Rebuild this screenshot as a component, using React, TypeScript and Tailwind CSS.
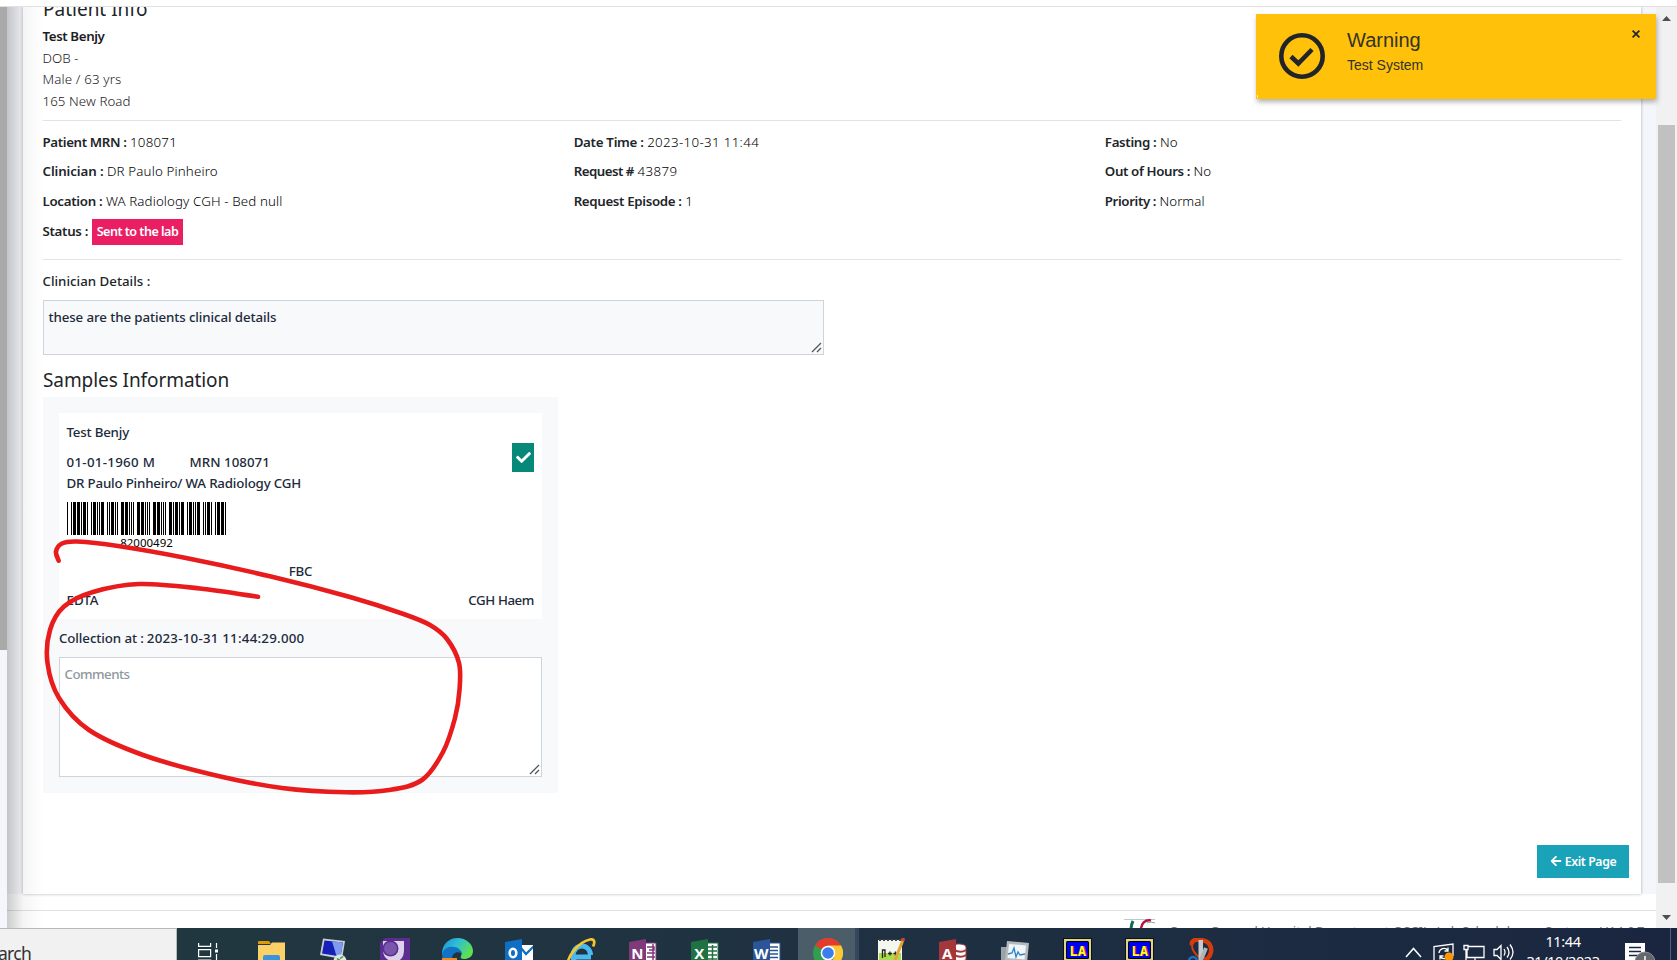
import type { ReactNode } from "react";
import { FaArrowLeft, FaCheck } from "react-icons/fa";

/* ---------- barcode (Code 39) ---------- */
const CODE39: Record<string, string> = {
  "*": "nwnnwnwnn",
  "0": "nnnwwnwnn",
  "2": "nnwwnnnnw",
  "4": "nnnwwnnnw",
  "8": "wnnwnnwnn",
  "9": "nnwwnnwnn",
};

function Barcode({ value }: { value: string }) {
  const bars: { x: number; w: number }[] = [];
  let x = 0;
  for (const ch of `*${value}*`) {
    [...CODE39[ch]].forEach((c, i) => {
      const w = c === "w" ? 3 : 1;
      if (i % 2 === 0) bars.push({ x, w });
      x += w;
    });
    x += 1;
  }
  return (
    <svg width="159" height="33" shapeRendering="crispEdges" className="block">
      {bars.map((b) => (
        <rect key={b.x} x={b.x} y="0" width={b.w} height="33" fill="#000" />
      ))}
    </svg>
  );
}

/* ---------- freehand red marker ---------- */
const MARK: [number, number][] = [
  [58.6, 560.7], [56, 551.5], [62, 543.5], [77, 541.5], [118, 546], [186, 558], [271, 576.5],
  [350, 597], [403.5, 614], [430, 625], [447, 639], [459, 663], [459.5, 690], [455, 718], [443, 752], [422, 780],
  [389, 790], [346, 792.3], [282, 788], [214, 775], [143, 755], [89, 730], [59, 698],
  [47.5, 663], [50, 630], [64, 606.5], [93, 592], [139, 584], [200, 588.5], [258, 596.8],
];

function smooth(p: [number, number][]) {
  let d = `M${p[0][0]} ${p[0][1]}`;
  for (let i = 0; i < p.length - 1; i++) {
    const a = p[Math.max(i - 1, 0)];
    const b = p[i];
    const c = p[i + 1];
    const e = p[Math.min(i + 2, p.length - 1)];
    d += ` C${b[0] + (c[0] - a[0]) / 6} ${b[1] + (c[1] - a[1]) / 6} ${c[0] - (e[0] - b[0]) / 6} ${c[1] - (e[1] - b[1]) / 6} ${c[0]} ${c[1]}`;
  }
  return d;
}

function Grip() {
  return (
    <svg width="11" height="11" viewBox="0 0 11 11" className="absolute right-[1px] bottom-[1px]" stroke="#555" strokeWidth="1.3" fill="none">
      <path d="M1 10L10 1M6 10L10 6" />
    </svg>
  );
}

function Field({ label, track, children, vtrack = "" }: { label: string; track: string; children: ReactNode; vtrack?: string }) {
  return (
    <div className="flex h-[29.5px] items-center gap-[3.5px] whitespace-nowrap">
      <span className={`font-semibold ${track}`}>{label}</span>
      <span className={`font-[350] text-black ${vtrack}`}>{children}</span>
    </div>
  );
}

/* ---------- taskbar icons ---------- */
function OfficeIcon({ letter, color, kind }: { letter: string; color: string; kind: "tabs" | "grid" | "lines" | "db" }) {
  return (
    <svg width="28" height="32" viewBox="0 0 28 32">
      {kind !== "db" && <rect x="14" y="4" width="13" height="24" fill="#fff" stroke={color} strokeWidth="1" />}
      {kind === "tabs" && <path d="M18 8h7v3h-5M18 14h8M18 18h8M18 22h8M24 5v20" stroke={color} strokeWidth="1.5" fill="none" />}
      {kind === "grid" && <path d="M17 8h9M17 12h9M17 16h9M17 20h9M21.5 6v20" stroke={color} strokeWidth="1.5" fill="none" />}
      {kind === "lines" && <path d="M17 8h8M17 11.5h8M17 15h8M17 18.5h8M17 22h8" stroke={color} strokeWidth="1.5" fill="none" />}
      {kind === "db" && (
        <g fill="#fff" stroke={color}>
          <path d="M15 6c3-2 12-1 12 2v16H15z" />
          <path d="M15 11c4 2 9 2 12 0M15 16c4 2 9 2 12 0M15 21c4 2 9 2 12 0" strokeWidth="2" fill="none" />
        </g>
      )}
      <path d="M0 3L17 0V32L0 29z" fill={color} />
      <text x="8.3" y="19.5" fontSize="15" fontWeight="700" textAnchor="middle" fill="#fff" fontFamily="Open Sans, sans-serif">{letter}</text>
    </svg>
  );
}

function LaIcon() {
  return (
    <svg width="29" height="32" viewBox="0 0 29 32">
      <rect x="0" y="0" width="29" height="32" fill="#111" />
      <rect x="1" y="1" width="27" height="30" fill="#d9d58d" />
      <rect x="3" y="3" width="23" height="18" rx="1.5" fill="#000" />
      <rect x="4" y="4" width="21" height="16" fill="#0000f0" />
      <text x="15.7" y="18" fontSize="14" fontWeight="700" textAnchor="middle" fill="#d01010" fontFamily="DejaVu Sans Mono, monospace">LA</text>
      <text x="14.7" y="18" fontSize="14" fontWeight="700" textAnchor="middle" fill="#ffff20" fontFamily="DejaVu Sans Mono, monospace">LA</text>
    </svg>
  );
}

function Cell({ children, top = "pt-[10px]" }: { children: ReactNode; top?: string }) {
  return <div className={`flex w-[62px] shrink-0 justify-center ${top}`}>{children}</div>;
}

function Taskbar() {
  return (
    <div className="flex h-[32px] shrink-0 overflow-hidden bg-linear-to-r from-[#22393f] via-[#1f3142] to-[#1a2640]">
      <div className="flex h-[32px] w-[177px] shrink-0 border-t border-r border-[#b9b9b9] bg-[#f1f1f1]">
        <span className="-ml-[2px] pt-[13px] text-[17.5px] leading-[22px] tracking-[-0.7px] text-[#303030]">arch</span>
      </div>
      <Cell top="pt-[15px]">
        <svg width="20" height="20" viewBox="0 0 20 20" fill="none" stroke="#fff" strokeWidth="1.2">
          <path d="M.6 0v3.4h12V0M.6 6.6h12v7H.6zM.6 20v-3h12v3M18.5 0v5M18.5 11v9" />
          <rect x="17" y="6.5" width="3" height="3" fill="#fff" stroke="none" />
        </svg>
      </Cell>
      <div className="w-px shrink-0" />
      <Cell top="pt-[13px]">
        <svg width="27" height="22" viewBox="0 0 27 22">
          <path d="M0 1q0-1 1-1h10l2 3h-13z" fill="#dc9a08" />
          <path d="M0 4h12l2-2.5h13V22H0z" fill="#fbd067" />
          <path d="M5 22v-6q0-2 2-2h13q2 0 2 2v6z" fill="#3a94dc" />
          <path d="M10 22v-3h7v3z" fill="#f3c14f" />
        </svg>
      </Cell>
      <Cell>
        <svg width="28" height="24" viewBox="0 0 28 24">
          <path d="M4 .5L26 3l-3 18L1 17z" fill="#c9ced2" />
          <path d="M5.5 2.5L24 4.5l-2.5 14L3 15.5z" fill="#1420b8" />
          <path d="M13 3.3L24 4.5l-2.500 14-4-.6z" fill="#7d9cf0" />
          <circle cx="21" cy="23" r="6.5" fill="#dfe6df" />
          <path d="M18 20.5l3 2-3 2M24 18.5l-3 2" stroke="#2f9140" strokeWidth="1.5" fill="none" />
        </svg>
      </Cell>
      <Cell>
        <svg width="30" height="30" viewBox="0 0 30 30">
          <path d="M5 0h25v30H0V5z" fill="#5c2d91" />
          <path d="M3 3h21v9q0 11-10 12-11-2-11-12z" fill="#dcd3ea" />
          <circle cx="10.500" cy="10.500" r="8" fill="#5c2d91" />
          <circle cx="10.500" cy="10.500" r="6.500" fill="#7a55ac" />
        </svg>
      </Cell>
      <Cell>
        <svg width="31" height="31" viewBox="0 0 31 31">
          <defs>
            <linearGradient id="edge" x1="0" x2="1" y1="0" y2=".5">
              <stop offset="0" stopColor="#1b8fd6" />
              <stop offset=".5" stopColor="#2fc0d3" />
              <stop offset="1" stopColor="#5fe04f" />
            </linearGradient>
          </defs>
          <path d="M0 16C0 6 7 0 15.500 0S31 6 31 13c0 6-5 8-9 8-3 0-4-1-3-3 2-4-1-7-5-7C8 11 1 14 0 18z" fill="url(#edge)" />
          <path d="M0 16c2-6 7-8 12-7 4 0 7 3 7 6-5-2-9 1-9 6l1 10C4 29 0 23 0 16z" fill="#1272c6" />
          <rect x="0" y="20" width="15" height="3" fill="#f48b1c" />
        </svg>
      </Cell>
      <Cell top="pt-[11px]">
        <svg width="28" height="30" viewBox="0 0 28 30">
          <rect x="15" y="6" width="13" height="16" fill="#fff" />
          <path d="M16 9l5 6 8-8" stroke="#0f6fc4" strokeWidth="2.2" fill="none" />
          <path d="M0 3L17 0v30L0 27z" fill="#0f6fc4" />
          <ellipse cx="8" cy="14" rx="3.3" ry="4.2" fill="none" stroke="#fff" strokeWidth="2.6" />
        </svg>
      </Cell>
      <Cell>
        <svg width="30" height="30" viewBox="0 0 30 30" fill="none">
          <path d="M25 19H8M24.500 17c0-5-4-9-8.500-9-5 0-9 4-9 10s4 10 9 10" stroke="#49b9ef" strokeWidth="5" />
          <path d="M2 28C0 20 12 4 24 1.500c5-1 5 3 3 7" stroke="#f7c52c" strokeWidth="2.7" />
        </svg>
      </Cell>
      <Cell top="pt-[11px]"><OfficeIcon letter="N" color="#80397b" kind="tabs" /></Cell>
      <Cell top="pt-[11px]"><OfficeIcon letter="X" color="#1f7244" kind="grid" /></Cell>
      <Cell top="pt-[11px]"><OfficeIcon letter="W" color="#2a5699" kind="lines" /></Cell>
      <div className="flex w-[62px] shrink-0">
        <div className="flex w-[57px] justify-center bg-[#4b5d69] pt-[10px] pl-[3px]">
          <svg width="30" height="30" viewBox="0 0 30 30">
            <circle cx="15" cy="15" r="15" fill="#2f9e4f" />
            <path d="M15 15L2 7.5A15 15 0 0 1 28 7.5z" fill="#e33b2e" />
            <path d="M15 7.5h13A15 15 0 0 1 15 30l6.5-11z" fill="#fcc934" />
            <circle cx="15" cy="15" r="7.3" fill="#fff" />
            <circle cx="15" cy="15" r="5.8" fill="#3b7ded" />
          </svg>
        </div>
        <div className="w-[4px] bg-[#35475a]" />
      </div>
      <Cell>
        <svg width="28" height="30" viewBox="0 0 28 30">
          <path d="M1 2h24v28H1z" fill="#f4f6f0" />
          <path d="M2 15h22v15H2z" fill="#a9dd4e" />
          <path d="M2 2h22" stroke="#444" strokeDasharray="2 2" strokeWidth="2" />
          <path d="M5.5 20V12H8v7M11 15.5h4M13 13.500v4M16.500 15.500h4M18.500 13.500v4" stroke="#222" strokeWidth="1.3" fill="none" />
          <path d="M26 2L18 22" stroke="#e3a43a" strokeWidth="3" />
          <path d="M26.5 0l-1 3" stroke="#c24b3a" strokeWidth="3.5" />
        </svg>
      </Cell>
      <Cell top="pt-[11px]"><OfficeIcon letter="A" color="#a4373a" kind="db" /></Cell>
      <Cell top="pt-[13px]">
        <svg width="28" height="24" viewBox="0 0 28 24">
          <path d="M0 6h8v18H0z" fill="#9aa3a6" />
          <path d="M6 0l22 2-2 20L4 19z" fill="#b4babd" />
          <path d="M8 3l17 1.500-1.500 14L6.500 17z" fill="#f0f5f9" />
          <path d="M7 13l4-1 2-5 2 9 2-5 2 3 5-1" stroke="#2c83c4" strokeWidth="1.3" fill="none" />
        </svg>
      </Cell>
      <Cell><LaIcon /></Cell>
      <Cell><LaIcon /></Cell>
      <Cell>
        <svg width="26" height="30" viewBox="0 0 26 30" fill="none">
          <path d="M4 7C3 2 8 1 13 2c8 1 11 6 10 12-1 5-3 7-7 8" stroke="#d63c0b" strokeWidth="4.5" />
          <path d="M4 7c0 5 3 9 7 12" stroke="#d63c0b" strokeWidth="2" />
          <path d="M10.5 2H15v20h-4.500z" fill="#c8cbce" />
          <path d="M18 10l-5 12" stroke="#aeb4b8" strokeWidth="4" />
          <circle cx="5" cy="23" r="4" stroke="#1a6fc0" strokeWidth="2.5" />
        </svg>
      </Cell>

      <div className="ml-auto flex shrink-0 text-white">
        <svg width="112" height="32" viewBox="0 0 112 32" fill="none" stroke="#fff" strokeWidth="1.3" className="mr-[8px]">
          <path d="M3 29l7.500-8.500L18 29" strokeWidth="1.500" />
          <path d="M31 32V18.500L50 16v12" />
          <path d="M36 25a5 5 0 0 1 9-2.500M45 19.500v3.500h-3.500M46 26a5 5 0 0 1-9 2.500M37 31.500V28h3.500" />
          <circle cx="46" cy="29" r="4.500" fill="#ff9800" stroke="none" />
          <path d="M65 18.500h16v11H64v-8M61 17.500h4v4h-4zM63 21.500V32M72 29.500V32" />
          <path d="M91 21.500h3l4-4v14l-4-4h-3zM101 21q2 3 0 6.500M104 19q4 5.500 0 10.500M107 16.500q6 8 0 15" />
        </svg>
        <div className="flex w-[80px] flex-col items-center pt-[4px] text-[14.5px] tracking-[-0.4px]">
          <span className="leading-[19px]">11:44</span>
          <span className="leading-[21px]">31/10/2023</span>
        </div>
        <svg width="52" height="32" viewBox="0 0 52 32" className="ml-[22px]">
          <path d="M0 15h20v17H0z" fill="#fff" />
          <path d="M4 19.500h12M4 23.500h12M4 27.500h12" stroke="#1a2640" strokeWidth="1.300" />
          <circle cx="20" cy="34" r="10" fill="#64676b" stroke="#8b8e91" />
          <path d="M20 28v4" stroke="#fff" strokeWidth="1.500" />
          <path d="M45.500 0v32" stroke="#53607a" />
        </svg>
      </div>
    </div>
  );
}

function Toast() {
  return (
    <div className="absolute top-[14px] left-[1256px] flex h-[85px] w-[400px] bg-[#ffc10a] font-['Liberation_Sans',Arial,sans-serif] text-[#212529] shadow-[1px_3px_5px_rgba(0,0,0,0.3)]">
      <svg width="46" height="46" viewBox="0 0 46 46" fill="none" stroke="#212529" strokeWidth="4.6" className="mt-[19px] ml-[23px]">
        <circle cx="23" cy="23" r="20.7" />
        <path d="M12 23.500l7.300 7L33 16.500" />
      </svg>
      <div className="ml-[22px] pt-[14px] text-[#343326]">
        <div className="text-[20px] leading-[24px]">Warning</div>
        <div className="mt-[3px] text-[14px] leading-[20px]">Test System</div>
      </div>
      <svg width="8" height="8" viewBox="0 0 8 8" stroke="#212529" strokeWidth="1.7" className="mt-[16px] mr-[16px] ml-auto">
        <path d="M.6.6l6.800 6.800M7.400.6L.6 7.400" />
      </svg>
      <div className="absolute bottom-[1px] left-[1px] h-[3px] w-px bg-white/70" />
    </div>
  );
}

function Sample() {
  return (
    <div className="h-[396px] w-[515px] bg-[#f8f9fb] p-[16px] font-medium text-[#212a3a]">
      <div className="flex h-[206px] flex-col bg-white px-[8px] pt-[8px] whitespace-nowrap">
        <div className="-ml-[0.5px] flex justify-between">
          <div>
            <div className="h-[23px] leading-[23px] tracking-[-0.2px]">Test Benjy</div>
            <div className="mt-[8.5px] flex h-[21px] leading-[21px]">
              <span className="w-[123px] tracking-[0.3px]">01-01-1960 M</span>
              <span className="tracking-[0.03px]">MRN 108071</span>
            </div>
            <div className="h-[21px] leading-[21px] tracking-[-0.18px]">DR Paulo Pinheiro/ WA Radiology CGH</div>
          </div>
          <div className="mt-[22px] flex h-[29px] w-[22px] items-center justify-center bg-[#07897a] text-white">
            <FaCheck size={15} />
          </div>
        </div>
        <div className="mt-[7.5px]">
          <Barcode value="82000492" />
        </div>
        <div className="w-[159px] text-center text-[11.5px] leading-[16px] font-[370] text-black">82000492</div>
        <div className="h-[40px] text-center leading-[40px] tracking-[-0.2px]">FBC</div>
        <div className="-ml-[0.5px] flex h-[18px] justify-between leading-[18px]">
          <span>EDTA</span>
          <span className="tracking-[-0.42px]">CGH Haem</span>
        </div>
      </div>
      <div className="flex h-[38px] gap-[3px] leading-[38px] whitespace-nowrap">
        <span className="tracking-[-0.1px]">Collection at :</span>
        <span className="tracking-[0.24px]">2023-10-31 11:44:29.000</span>
      </div>
      <div className="relative h-[120px] border border-[#ced4da] bg-white px-[4.5px] pt-[6px] leading-[21px] tracking-[-0.55px] text-[#8f979e]">
        Comments
        <Grip />
      </div>
    </div>
  );
}

export default function App() {
  return (
    <div className="relative flex h-[960px] w-[1677px] flex-col overflow-hidden bg-white font-['Noto_Sans',sans-serif] text-[13.3px] text-[#212529]">
      <div className="h-[7px] shrink-0 border-b border-[#e0e0e0]" />
      <div className="flex min-h-0 flex-1">
        <div className="w-[7px] shrink-0 bg-[#f4f6fb]">
          <div className="h-[643px] bg-[#a9a9a9]" />
        </div>

        <div className="relative flex min-w-0 flex-1 flex-col overflow-hidden">
          <div className="h-[887px] shrink-0 bg-[#f4f6fb] pr-[15px] pl-[16px]">
            <div className="h-[887px] overflow-hidden bg-white px-[20px] shadow-[0_0_3px_rgba(0,0,0,0.3)]">
              <h4 className="-mt-[7px] h-[18px] text-[19px] leading-[18px] font-[390] whitespace-nowrap">Patient Info</h4>
              <div className="mt-[8px] -ml-[0.5px] leading-[21.67px] font-[350] text-[#1c2023]">
                <div className="font-semibold tracking-[-0.39px]">Test Benjy</div>
                <div>DOB -</div>
                <div className="tracking-[0.15px]">Male / 63 yrs</div>
                <div className="tracking-[0.08px]">165 New Road</div>
              </div>
              <div className="mt-[7.3px] h-px bg-[#e2e3e4]" />
              <div className="-mr-[15px] mt-[7px] -ml-[0.5px] grid grid-cols-3">
                <div>
                  <Field label="Patient MRN :" track="tracking-[-0.37px]" vtrack="tracking-[0.25px]">108071</Field>
                  <Field label="Clinician :" track="tracking-[-0.1px]" vtrack="tracking-[0.15px]">DR Paulo Pinheiro</Field>
                  <Field label="Location :" track="tracking-[-0.3px]" vtrack="tracking-[0.12px]">WA Radiology CGH - Bed null</Field>
                  <div className="flex h-[31px] items-center">
                    <span className="w-[49.5px] font-semibold tracking-[-0.3px]">Status :</span>
                    <span className="h-[26px] w-[91px] bg-[#e91e63] text-center text-[12.6px] leading-[25px] font-semibold tracking-[-0.52px] whitespace-nowrap text-white">Sent to the lab</span>
                  </div>
                </div>
                <div>
                  <Field label="Date Time :" track="tracking-[-0.29px]" vtrack="tracking-[0.35px]">2023-10-31 11:44</Field>
                  <Field label="Request #" track="tracking-[-0.52px]" vtrack="tracking-[0.4px]">43879</Field>
                  <Field label="Request Episode :" track="tracking-[-0.34px]">1</Field>
                </div>
                <div>
                  <Field label="Fasting :" track="tracking-[-0.33px]">No</Field>
                  <Field label="Out of Hours :" track="tracking-[-0.38px]">No</Field>
                  <Field label="Priority :" track="tracking-[-0.4px]">Normal</Field>
                </div>
              </div>
              <div className="mt-[11.5px] h-px bg-[#e2e3e4]" />
              <div className="mt-[3px] -ml-[0.5px] h-[37px] leading-[37px] font-medium">Clinician Details :</div>
              <div className="relative h-[55px] w-[781px] border border-[#ced4da] bg-[#f8f9fb] px-[4.5px] pt-[6px] leading-[21px] font-medium tracking-[-0.1px] text-[#212a3a]">
                these are the patients clinical details
                <Grip />
              </div>
              <h4 className="mt-[9.500px] h-[32.500px] text-[19px] leading-[33px] font-[390] tracking-[-0.08px]">Samples Information</h4>
              <Sample />
              <div className="mt-[52px] -mr-[8px] flex justify-end">
                <div className="flex h-[33px] w-[92px] items-center justify-center gap-[3px] bg-[#19a2b8] pt-[1px] text-[12.3px] font-semibold tracking-[-0.4px] whitespace-nowrap text-white">
                  <FaArrowLeft size={12} className="-mt-[1px]" />
                  Exit Page
                </div>
              </div>
            </div>
          </div>
          <div className="mt-[16px] h-px shrink-0 bg-[#dee2e6]" />
          <div className="flex h-[17px] shrink-0 overflow-hidden pl-[1117px] text-[#6c757d]">
            <svg width="33" height="17" viewBox="0 0 33 17" fill="none" className="shrink-0">
              <path d="M0 8.500h31" stroke="#c3c7c6" />
              <path d="M9 10q-2 4-2 9" stroke="#0b6b57" strokeWidth="3" />
              <path d="M27 9.500c-6-1-10 3-10 9" stroke="#b5123e" strokeWidth="2.500" />
              <path d="M23 12q4-2 8 0" stroke="#7fae9f" />
            </svg>
            <div className="flex pt-[10px] pl-[12px] text-[13px] leading-[20px] whitespace-nowrap">
              <span className="w-[224px]">Cavan General Hospital Department</span>
              <span className="w-[152px]">OSCIL: Lab Scheduler</span>
              <span className="w-[55px]">System</span>
              <span className="tracking-[-0.5px]">V4.1.0.7</span>
            </div>
          </div>
          <div className="absolute inset-y-0 left-0 w-[36px] bg-linear-to-r from-black/20 via-black/4 via-45% to-transparent" />
        </div>

        <div className="flex w-[21px] shrink-0 flex-col items-center justify-between bg-[#f1f1f1] pt-[9px] pb-[8px]">
          <svg width="9" height="5" viewBox="0 0 9 5"><path d="M0 5L4.500 0 9 5z" fill="#505050" /></svg>
          <div className="mt-[104px] h-[758px] w-[17px] bg-[#c1c1c1]" />
          <svg width="9" height="5" viewBox="0 0 9 5" className="mt-auto"><path d="M0 0L4.500 5 9 0z" fill="#505050" /></svg>
        </div>
      </div>

      <Taskbar />
      <Toast />
      <svg width="480" height="820" className="pointer-events-none absolute top-0 left-0" fill="none">
        <path d={smooth(MARK)} stroke="#e81c1c" strokeWidth="4.6" strokeLinecap="round" strokeLinejoin="round" />
      </svg>
    </div>
  );
}
